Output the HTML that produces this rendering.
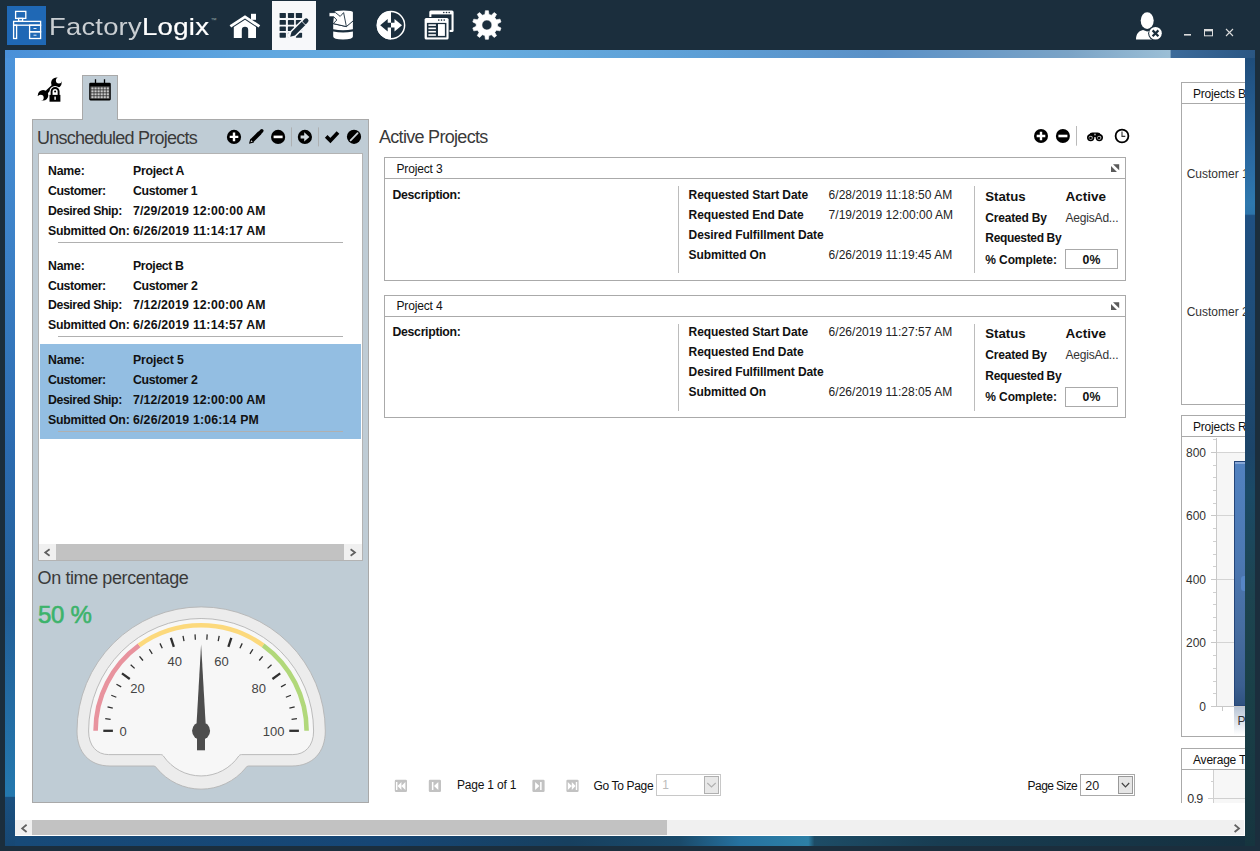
<!DOCTYPE html>
<html><head><meta charset="utf-8">
<style>
*{margin:0;padding:0;box-sizing:border-box}
html,body{width:1260px;height:851px;overflow:hidden;background:#1b2e3d;font-family:"Liberation Sans",sans-serif;color:#000;position:relative}
.a{position:absolute}
.t{position:absolute;white-space:nowrap;line-height:1}
svg{position:absolute;left:0;top:0;overflow:visible}
</style></head><body>
<div class="a" style="left:5px;top:50px;width:1250px;height:8px;background:linear-gradient(90deg,#4a90d8 0%,#5fa6df 20%,#68aee0 35%,#5d9fd6 55%,#5a90c6 70%,#7aa3c6 85%,#9cbfd6 93.2%,#3d6b9a 93.3%,#2a5683 100%)"></div>
<div class="a" style="left:5px;top:58px;width:10px;height:788px;background:linear-gradient(180deg,#4b93da 0%,#3b80c6 25%,#2b6bb0 50%,#225f98 70%,#2478ae 93.7%,#1a5080 93.8%,#174874 100%)"></div>
<div class="a" style="left:1245px;top:58px;width:10px;height:788px;background:linear-gradient(180deg,#1f4d7b 0%,#2a68a0 12%,#2e78ae 18.5%,#2c74aa 19.8%,#1f5082 20%,#1f4d78 35%,#1c4468 50%,#1b4a66 55%,#1d4450 68%,#1a4048 80%,#16353f 100%)"></div>
<div class="a" style="left:15px;top:836px;width:1230px;height:10px;background:linear-gradient(90deg,#174a78 0%,#164675 30%,#17405f 45%,#1a4a6a 54%,#2672a0 59%,#2d80a6 64.5%,#1d4c66 65%,#183d52 75%,#15303f 100%)"></div>
<div class="a" style="left:15px;top:58px;width:1230px;height:778px;background:#fff"></div>
<div class="a" style="left:7px;top:6px;width:39px;height:39px;background:#1f68b5"></div>
<div class="a" style="left:272px;top:1px;width:44px;height:49px;background:#f7f8fa"></div>
<svg width="1260" height="50" viewBox="0 0 1260 50">
<g fill="none" stroke="#fff" stroke-width="1.3"><rect x="15.6" y="11.4" width="10.2" height="7"/><rect x="18.6" y="18.4" width="4" height="2.8"/><rect x="13.6" y="21.4" width="27" height="3.8"/><rect x="13.6" y="25.2" width="3" height="13.3"/><rect x="29.6" y="25.2" width="11" height="6.6"/><rect x="29.6" y="31.8" width="11" height="6.7"/></g><g stroke="#fff" stroke-width="0.9"><path d="M33.5,28.5h3M33.5,35.2h3"/></g>
<g fill="#fff"><path d="M229.6,25.2 L245,15.2 L260.2,25.2 L258.6,27.6 L245,18.6 L231.2,27.6Z"/><rect x="251" y="13.8" width="5" height="6"/><path d="M233.8,27 L245,19.8 L256,27 V38 H248.2 V30 A3.2,3.2 0 0 0 241.8,30 V38 H233.8Z"/></g>
<g fill="#1b2e3d">
<rect x="279.6" y="12.9" width="6.3" height="5.0" rx="0.6"/>
<rect x="279.6" y="20.1" width="6.3" height="4.7" rx="0.6"/>
<rect x="279.6" y="26.4" width="6.3" height="4.6" rx="0.6"/>
<rect x="279.6" y="32.8" width="6.3" height="4.9" rx="0.6"/>
<rect x="287.9" y="12.9" width="6.2" height="5.0" rx="0.6"/>
<rect x="287.9" y="20.1" width="6.2" height="4.7" rx="0.6"/>
<rect x="287.9" y="26.4" width="6.2" height="4.6" rx="0.6"/>
<rect x="287.9" y="32.8" width="6.2" height="4.9" rx="0.6"/>
<rect x="295.8" y="12.9" width="6.3" height="5.0" rx="0.6"/>
<rect x="295.8" y="20.1" width="6.3" height="4.7" rx="0.6"/>
<rect x="295.8" y="26.4" width="6.3" height="4.6" rx="0.6"/>
<rect x="295.8" y="32.8" width="6.3" height="4.9" rx="0.6"/>
</g>
<path d="M291.5,35.5 L306,21" stroke="#f7f8fa" stroke-width="8" stroke-linecap="round"/><path d="M294.9,35.4 L291.5,32 L302,21.5 L305.4,24.9Z M291.5,32 L294.9,35.4 L290.2,36.8Z" fill="#1b2e3d"/><path d="M304.6,22.3 L306.2,20.7" stroke="#1b2e3d" stroke-width="4.6" stroke-linecap="round"/><path d="M301.9,21.4 L305.5,25" stroke="#f7f8fa" stroke-width="0.9"/>
<g fill="#fff"><path d="M333.2,31.6 Q343,33.6 352.9,31.6 V36.6 Q352.9,39.6 343,39.6 Q333.2,39.6 333.2,36.6Z"/><path d="M334.4,12.2 Q334.4,10.6 343.6,10.6 Q352.9,10.6 352.9,12.2 V29.2 Q343,31.2 333.2,29.2 V23Z"/></g><path d="M333,23.6 L346.4,26.6 L353,21" fill="none" stroke="#1b2e3d" stroke-width="1"/><path d="M329,12.6 L335.5,12.6 L340.2,16.4 L343.6,12.6 L346.4,26.6 L333.3,23.6 L336.8,20 L333.8,16.8 L329,16.8Z" fill="#fff" stroke="#1b2e3d" stroke-width="0.9" stroke-linejoin="miter"/>
<circle cx="391" cy="25.2" r="13.6" fill="#1b2e3d" stroke="#fff" stroke-width="1.5"/><path d="M391,10.9 A14.3,14.3 0 0 0 391,39.5Z" fill="#fff"/><path d="M380.2,25.2 L387.7,19 V22.8 H391 V27.6 H387.7 V31.4Z" fill="#1b2e3d"/><path d="M402,25.2 L394.5,19 V22.8 H391 V27.6 H394.5 V31.4Z" fill="#fff"/>
<rect x="429.3" y="10.4" width="24.3" height="21.6" rx="1.6" fill="#fff"/><rect x="431.4" y="14.4" width="20.1" height="15.5" fill="#1b2e3d"/><g fill="#1b2e3d"><circle cx="443.8" cy="12.5" r="0.8"/><circle cx="446.5" cy="12.5" r="0.8"/><circle cx="449.2" cy="12.5" r="0.8"/></g><rect x="423.6" y="16.9" width="26" height="23.7" rx="2" fill="#1b2e3d"/><rect x="424.6" y="17.9" width="24" height="21.7" rx="1.6" fill="#fff"/><rect x="426.9" y="22.9" width="19.5" height="14.5" fill="#1b2e3d"/><g fill="#fff"><rect x="428.4" y="24.3" width="7.5" height="1.6"/><rect x="428.4" y="27.6" width="7.5" height="1.6"/><rect x="428.4" y="30.9" width="7.5" height="1.6"/><rect x="428.4" y="34.2" width="7.5" height="1.6"/><rect x="438" y="24.1" width="6.9" height="11.8"/></g><g fill="#1b2e3d"><circle cx="438.8" cy="20.1" r="0.8"/><circle cx="441.5" cy="20.1" r="0.8"/><circle cx="444.2" cy="20.1" r="0.8"/></g>
<path fill="#fff" fill-rule="evenodd" stroke="#fff" stroke-width="0.6" stroke-linejoin="round" d="M484.86,14.39 L485.39,10.68 L488.41,10.68 L488.94,14.39 L491.48,15.22 L494.10,12.53 L496.54,14.30 L494.78,17.62 L496.36,19.78 L500.05,19.14 L500.99,22.01 L497.62,23.66 L497.62,26.34 L500.99,27.99 L500.05,30.86 L496.36,30.22 L494.78,32.38 L496.54,35.70 L494.10,37.47 L491.48,34.78 L488.94,35.61 L488.41,39.32 L485.39,39.32 L484.86,35.61 L482.32,34.78 L479.70,37.47 L477.26,35.70 L479.02,32.38 L477.44,30.22 L473.75,30.86 L472.81,27.99 L476.18,26.34 L476.18,23.66 L472.81,22.01 L473.75,19.14 L477.44,19.78 L479.02,17.62 L477.26,14.30 L479.70,12.53 L482.32,15.22Z M491.9,25 A5,5 0 1 0 481.9,25 A5,5 0 1 0 491.9,25Z"/>
<g fill="#fff"><ellipse cx="1147.2" cy="20.6" rx="6.5" ry="8.4"/><path d="M1136,39.5 C1136,33.5 1139,31 1143,30 L1147.2,31.5 L1151.5,30 C1154,30.8 1156,32 1157,34 V39.5Z"/></g><circle cx="1155.5" cy="33.3" r="7.4" fill="#1b2e3d"/><circle cx="1155.5" cy="33.3" r="6.3" fill="#fff"/><path d="M1152.6,30.4 L1158.4,36.2 M1158.4,30.4 L1152.6,36.2" stroke="#1b2e3d" stroke-width="2.2"/>
<g stroke="#dcdcdc" fill="none"><path d="M1184,34.8 H1191" stroke-width="1.6"/><rect x="1204.5" y="29.5" width="8" height="6.3" stroke-width="1"/><path d="M1204.5,30.6 H1212.5" stroke-width="1.5"/><path d="M1226,29 L1233,36 M1233,29 L1226,36" stroke-width="1.1"/></g>
</svg>
<div class="t" style="left:48.80px;top:16.24px;font-size:23.4px;color:#c9ced2;letter-spacing:0.2px;transform:scaleX(1.17);transform-origin:0 0;">Factory</div>
<div class="t" style="left:141.80px;top:16.24px;font-size:23.4px;color:#fff;letter-spacing:0.2px;-webkit-text-stroke:0.2px #fff;transform:scaleX(1.18);transform-origin:0 0;">Logix</div>
<div class="t" style="left:210.50px;top:17.48px;font-size:6px;color:#9aa;">™</div>
<div class="a" style="left:82px;top:75px;width:36px;height:45px;background:#bfccd5;border:1px solid #a9a9a9;border-bottom:none"></div>
<div class="a" style="left:32px;top:119px;width:337px;height:684px;background:#bfccd5;border:1px solid #a9a9a9"></div>
<div class="a" style="left:83px;top:119px;width:34px;height:2px;background:#bfccd5"></div>
<div class="a" style="left:38px;top:153px;width:325px;height:408px;background:#fff;border:1px solid #b3b3b3"></div>
<div class="a" style="left:40px;top:344px;width:321px;height:95px;background:#93bee2"></div>
<div class="t" style="left:37.00px;top:128.86px;font-size:18px;color:#3a3a3a;letter-spacing:-0.75px;">Unscheduled Projects</div>
<div class="t" style="left:37.60px;top:568.96px;font-size:18px;color:#3a3a3a;letter-spacing:-0.405px;">On time percentage</div>
<div class="t" style="left:38.00px;top:602.64px;font-size:24px;color:#3cb36b;letter-spacing:-0.301px;-webkit-text-stroke:0.6px #3cb36b;">50 %</div>
<div class="t" style="left:48.00px;top:165.02px;font-size:12.3px;font-weight:700;color:#111;letter-spacing:-0.199px;">Name:</div>
<div class="t" style="left:133.00px;top:165.02px;font-size:12.3px;font-weight:700;color:#111;letter-spacing:-0.281px;">Project A</div>
<div class="t" style="left:48.00px;top:185.02px;font-size:12.3px;font-weight:700;color:#111;letter-spacing:-0.422px;">Customer:</div>
<div class="t" style="left:133.00px;top:185.02px;font-size:12.3px;font-weight:700;color:#111;letter-spacing:-0.346px;">Customer 1</div>
<div class="t" style="left:48.00px;top:205.02px;font-size:12.3px;font-weight:700;color:#111;letter-spacing:-0.413px;">Desired Ship:</div>
<div class="t" style="left:133.00px;top:205.02px;font-size:12.3px;font-weight:700;color:#111;letter-spacing:0.155px;">7/29/2019 12:00:00 AM</div>
<div class="t" style="left:48.00px;top:224.92px;font-size:12.3px;font-weight:700;color:#111;letter-spacing:-0.248px;">Submitted On:</div>
<div class="t" style="left:133.00px;top:224.92px;font-size:12.3px;font-weight:700;color:#111;letter-spacing:0.187px;">6/26/2019 11:14:17 AM</div>
<div class="a" style="left:58px;top:242px;width:285px;height:1px;background:#b0b0b0"></div>
<div class="t" style="left:48.00px;top:260.02px;font-size:12.3px;font-weight:700;color:#111;letter-spacing:-0.199px;">Name:</div>
<div class="t" style="left:133.00px;top:260.02px;font-size:12.3px;font-weight:700;color:#111;letter-spacing:-0.378px;">Project B</div>
<div class="t" style="left:48.00px;top:279.92px;font-size:12.3px;font-weight:700;color:#111;letter-spacing:-0.422px;">Customer:</div>
<div class="t" style="left:133.00px;top:279.92px;font-size:12.3px;font-weight:700;color:#111;letter-spacing:-0.326px;">Customer 2</div>
<div class="t" style="left:48.00px;top:299.22px;font-size:12.3px;font-weight:700;color:#111;letter-spacing:-0.413px;">Desired Ship:</div>
<div class="t" style="left:133.00px;top:299.22px;font-size:12.3px;font-weight:700;color:#111;letter-spacing:0.155px;">7/12/2019 12:00:00 AM</div>
<div class="t" style="left:48.00px;top:318.92px;font-size:12.3px;font-weight:700;color:#111;letter-spacing:-0.248px;">Submitted On:</div>
<div class="t" style="left:133.00px;top:318.92px;font-size:12.3px;font-weight:700;color:#111;letter-spacing:0.187px;">6/26/2019 11:14:57 AM</div>
<div class="a" style="left:58px;top:336px;width:285px;height:1px;background:#b0b0b0"></div>
<div class="t" style="left:48.00px;top:354.02px;font-size:12.3px;font-weight:700;color:#111;letter-spacing:-0.199px;">Name:</div>
<div class="t" style="left:133.00px;top:354.02px;font-size:12.3px;font-weight:700;color:#111;letter-spacing:-0.150px;">Project 5</div>
<div class="t" style="left:48.00px;top:374.22px;font-size:12.3px;font-weight:700;color:#111;letter-spacing:-0.422px;">Customer:</div>
<div class="t" style="left:133.00px;top:374.22px;font-size:12.3px;font-weight:700;color:#111;letter-spacing:-0.326px;">Customer 2</div>
<div class="t" style="left:48.00px;top:394.22px;font-size:12.3px;font-weight:700;color:#111;letter-spacing:-0.413px;">Desired Ship:</div>
<div class="t" style="left:133.00px;top:394.22px;font-size:12.3px;font-weight:700;color:#111;letter-spacing:0.155px;">7/12/2019 12:00:00 AM</div>
<div class="t" style="left:48.00px;top:414.42px;font-size:12.3px;font-weight:700;color:#111;letter-spacing:-0.248px;">Submitted On:</div>
<div class="t" style="left:133.00px;top:414.42px;font-size:12.3px;font-weight:700;color:#111;letter-spacing:0.181px;">6/26/2019 1:06:14 PM</div>
<div class="a" style="left:58px;top:431px;width:285px;height:1px;background:#b0b0b0"></div>
<div class="a" style="left:39px;top:544px;width:323px;height:16px;background:#f0f0f0"></div>
<div class="a" style="left:56px;top:544px;width:288px;height:16px;background:#c2c2c2"></div>
<svg width="1260" height="851" viewBox="0 0 1260 851">
<circle cx="234" cy="136.9" r="7.1" fill="#000"/><path d="M229.7,136.9 H238.3 M234,132.6 V141.20000000000002" stroke="#fff" stroke-width="2.4"/>
<path d="M251.8,140.8 L259.8,132.8" stroke="#000" stroke-width="4.2"/><path d="M260.2,132.4 L261.8,130.8" stroke="#000" stroke-width="3.6" stroke-linecap="round"/><path d="M249,143.8 L250.3,138.8 L254,142.5Z" fill="#000"/><path d="M250.6,142.2 L251.2,140.2 L252.6,141.6Z" fill="#ddd"/>
<circle cx="278.1" cy="136.9" r="7.1" fill="#000"/><path d="M273.6,136.9 H282.6" stroke="#fff" stroke-width="2.6"/>
<path d="M291.5,127.4 V146.4 M318.5,127.4 V146.4" stroke="#a8a8a8" stroke-width="0.8"/>
<circle cx="304.9" cy="136.9" r="7.1" fill="#000"/><path d="M300.6,135.4 H304.2 V132.2 L309.4,136.9 L304.2,141.6 V138.4 H300.6Z" fill="#d0d8de"/>
<path d="M326.2,136.4 L330.4,140.6 L338,132.4" stroke="#000" stroke-width="3.7" fill="none"/>
<circle cx="354" cy="136.8" r="7.1" fill="#000"/><path d="M350.6,140.4 L357.6,133.2" stroke="#c8d0d6" stroke-width="1.8" stroke-linecap="round"/>
<circle cx="1041" cy="136" r="7.0" fill="#000"/><path d="M1036.7,136 H1045.3 M1041,131.7 V140.3" stroke="#fff" stroke-width="2.4"/>
<circle cx="1062.9" cy="136" r="7.0" fill="#000"/><path d="M1058.4,136 H1067.4" stroke="#fff" stroke-width="2.6"/>
<path d="M1076.5,126 V145.7" stroke="#a8a8a8" stroke-width="0.8"/>
<path d="M1089,135 Q1090,132.3 1093,132.6 L1097,132.6 Q1100,132.3 1101,135 L1101,137 L1089,137Z" fill="#000"/><circle cx="1090.7" cy="137.6" r="3.7" fill="#000"/><circle cx="1099.3" cy="137.6" r="3.7" fill="#000"/><circle cx="1090.7" cy="137.8" r="2.1" fill="#bbb"/><circle cx="1099.3" cy="137.8" r="2.1" fill="#bbb"/><circle cx="1090.5" cy="138" r="1.3" fill="#000"/><circle cx="1099.1" cy="138" r="1.3" fill="#000"/><circle cx="1095" cy="134.5" r="0.9" fill="#aaa"/>
<circle cx="1122" cy="136" r="6.4" fill="none" stroke="#000" stroke-width="1.8"/><path d="M1122,131.5 V136.4 H1125.3" stroke="#333" stroke-width="1.1" fill="none"/>
<defs><mask id="wm"><rect x="30" y="70" width="40" height="40" fill="#fff"/><circle cx="58.9" cy="80.4" r="3.0" fill="#000"/><path d="M58.9,80.4 L59.5,72 L68,80Z" fill="#000"/><circle cx="40.7" cy="97.7" r="3.0" fill="#000"/><path d="M40.7,97.7 L32,97.5 L40.5,106Z" fill="#000"/></mask></defs><g mask="url(#wm)" fill="#000"><circle cx="56.4" cy="82.8" r="5.3"/><circle cx="43.1" cy="95.3" r="5.3"/><path d="M56.4,82.8 L43.1,95.3" stroke="#000" stroke-width="3.2"/></g><path d="M51.6,95 V91.5 A3.5,3.5 0 0 1 58.6,91.5 V95" fill="none" stroke="#fff" stroke-width="4.2"/><rect x="48.6" y="94" width="12.7" height="8.6" fill="#fff"/><path d="M51.6,95 V91.5 A3.5,3.5 0 0 1 58.6,91.5 V95" fill="none" stroke="#000" stroke-width="1.9"/><circle cx="55.1" cy="91.6" r="1" fill="#000"/><rect x="49.5" y="94.9" width="10.9" height="6.8" fill="#000"/><rect x="54.4" y="96.6" width="1.4" height="3.2" fill="#fff"/>
<rect x="89.2" y="82.8" width="21.6" height="17.6" rx="1.3" fill="#000"/><rect x="90.6" y="86.6" width="18.8" height="12.2" fill="#c9c9c9"/>
<rect x="90.60" y="86.6" width="0.7" height="12.2" fill="#222"/>
<rect x="93.65" y="86.6" width="0.7" height="12.2" fill="#222"/>
<rect x="96.70" y="86.6" width="0.7" height="12.2" fill="#222"/>
<rect x="99.75" y="86.6" width="0.7" height="12.2" fill="#222"/>
<rect x="102.80" y="86.6" width="0.7" height="12.2" fill="#222"/>
<rect x="105.85" y="86.6" width="0.7" height="12.2" fill="#222"/>
<rect x="108.90" y="86.6" width="0.7" height="12.2" fill="#222"/>
<rect x="90.6" y="86.60" width="18.8" height="0.7" fill="#222"/>
<rect x="90.6" y="89.55" width="18.8" height="0.7" fill="#222"/>
<rect x="90.6" y="92.50" width="18.8" height="0.7" fill="#222"/>
<rect x="90.6" y="95.45" width="18.8" height="0.7" fill="#222"/>
<rect x="90.6" y="98.40" width="18.8" height="0.7" fill="#222"/>
<path d="M95.5,79.2 V85 M104.5,79.2 V85" stroke="#000" stroke-width="1.3"/>
<path d="M77,731 A124,124 0 0 1 325.3,731 C325.3,752 313,766 292,766 L248.5,766 Q246.6,766 245.6,768 A57.4,57.4 0 0 1 156.6,768 Q155.6,766 153.7,766 L110,766 C89,766 77,752 77,731Z" fill="#ececec" stroke="#b4b4b4" stroke-width="0.9"/>
<path d="M88.6,731 A112.5,112.5 0 0 1 313.6,731 C313.6,746 305,754.6 292.8,754.6 L241.5,754.6 Q239.6,754.6 238.8,756 A45.6,45.6 0 0 1 163.4,756 Q162.6,754.6 160.7,754.6 L108.6,754.6 C97,754.6 88.6,746 88.6,731Z" fill="#f7f7f7" stroke="#b4b4b4" stroke-width="0.9"/>
<path d="M95.60,730.80 A105.5,105.5 0 0 1 139.09,645.45" fill="none" stroke="#e8939e" stroke-width="4.6"/>
<path d="M139.09,645.45 A105.5,105.5 0 0 1 263.11,645.45" fill="none" stroke="#fcd97c" stroke-width="4.6"/>
<path d="M263.11,645.45 A105.5,105.5 0 0 1 306.60,730.80" fill="none" stroke="#b1d87a" stroke-width="4.6"/>
<path d="M103.30,730.80 L112.90,730.80" stroke="#303030" stroke-width="2.3"/>
<path d="M105.26,718.69 L110.62,719.37" stroke="#303030" stroke-width="1.3"/>
<path d="M107.53,706.78 L112.77,708.12" stroke="#303030" stroke-width="1.3"/>
<path d="M111.28,695.24 L116.30,697.23" stroke="#303030" stroke-width="1.3"/>
<path d="M116.45,684.26 L121.18,686.86" stroke="#303030" stroke-width="1.3"/>
<path d="M121.98,673.31 L129.74,678.96" stroke="#303030" stroke-width="2.3"/>
<path d="M130.68,664.67 L134.62,668.37" stroke="#303030" stroke-width="1.3"/>
<path d="M139.52,656.37 L142.97,660.53" stroke="#303030" stroke-width="1.3"/>
<path d="M149.34,649.24 L152.23,653.80" stroke="#303030" stroke-width="1.3"/>
<path d="M159.97,643.39 L162.27,648.28" stroke="#303030" stroke-width="1.3"/>
<path d="M170.88,637.79 L173.84,646.92" stroke="#303030" stroke-width="2.3"/>
<path d="M183.00,635.91 L184.01,641.22" stroke="#303030" stroke-width="1.3"/>
<path d="M195.03,634.39 L195.37,639.78" stroke="#303030" stroke-width="1.3"/>
<path d="M207.17,634.39 L206.83,639.78" stroke="#303030" stroke-width="1.3"/>
<path d="M219.20,635.91 L218.19,641.22" stroke="#303030" stroke-width="1.3"/>
<path d="M231.32,637.79 L228.36,646.92" stroke="#303030" stroke-width="2.3"/>
<path d="M242.23,643.39 L239.93,648.28" stroke="#303030" stroke-width="1.3"/>
<path d="M252.86,649.24 L249.97,653.80" stroke="#303030" stroke-width="1.3"/>
<path d="M262.68,656.37 L259.23,660.53" stroke="#303030" stroke-width="1.3"/>
<path d="M271.52,664.67 L267.58,668.37" stroke="#303030" stroke-width="1.3"/>
<path d="M280.22,673.31 L272.46,678.96" stroke="#303030" stroke-width="2.3"/>
<path d="M285.75,684.26 L281.02,686.86" stroke="#303030" stroke-width="1.3"/>
<path d="M290.92,695.24 L285.90,697.23" stroke="#303030" stroke-width="1.3"/>
<path d="M294.67,706.78 L289.43,708.12" stroke="#303030" stroke-width="1.3"/>
<path d="M296.94,718.69 L291.58,719.37" stroke="#303030" stroke-width="1.3"/>
<path d="M298.90,730.80 L289.30,730.80" stroke="#303030" stroke-width="2.3"/>
<path d="M201.1,644.3 L205.6,723 L196.6,723Z" fill="#4d4d4d"/><circle cx="201.1" cy="730.8" r="9" fill="#4d4d4d"/><rect x="197" y="735" width="8" height="15.3" fill="#4d4d4d"/>
</svg>
<div class="t" style="left:123.10px;top:725.27px;font-size:13px;color:#444;transform:translateX(-50%);">0</div>
<div class="t" style="left:137.60px;top:681.67px;font-size:13px;color:#444;transform:translateX(-50%);">20</div>
<div class="t" style="left:174.70px;top:654.67px;font-size:13px;color:#444;transform:translateX(-50%);">40</div>
<div class="t" style="left:221.60px;top:654.67px;font-size:13px;color:#444;transform:translateX(-50%);">60</div>
<div class="t" style="left:258.80px;top:681.67px;font-size:13px;color:#444;transform:translateX(-50%);">80</div>
<div class="t" style="left:273.60px;top:725.27px;font-size:13px;color:#444;transform:translateX(-50%);">100</div>
<div class="t" style="left:379.00px;top:127.55px;font-size:18px;color:#3a3a3a;letter-spacing:-0.7px;">Active Projects</div>
<div class="a" style="left:384px;top:157px;width:742px;height:124px;border:1px solid #aaa;background:#fff"></div>
<div class="a" style="left:385px;top:178px;width:740px;height:1px;background:#aaa"></div>
<div class="a" style="left:678px;top:186px;width:1px;height:87px;background:#bcbcbc"></div>
<div class="a" style="left:974px;top:186px;width:1px;height:87px;background:#bcbcbc"></div>
<div class="a" style="left:1065px;top:249px;width:53px;height:20px;border:1px solid #aaa;background:#fff"></div>
<svg width="1260" height="851"><path d="M1113,164.2 H1119.2 V170.2Z M1111,166 V172 H1117Z" fill="#5a5a5a"/></svg>
<div class="t" style="left:396.50px;top:163.27px;font-size:12px;color:#111;letter-spacing:-0.15px;">Project 3</div>
<div class="t" style="left:392.50px;top:188.62px;font-size:12.3px;font-weight:700;color:#111;letter-spacing:-0.312px;">Description:</div>
<div class="t" style="left:688.60px;top:188.97px;font-size:12px;font-weight:700;color:#111;letter-spacing:-0.1px;">Requested Start Date</div>
<div class="t" style="left:828.60px;top:188.97px;font-size:12px;color:#222;letter-spacing:0.02px;">6/28/2019 11:18:50 AM</div>
<div class="t" style="left:688.60px;top:208.82px;font-size:12px;font-weight:700;color:#111;letter-spacing:-0.1px;">Requested End Date</div>
<div class="t" style="left:828.60px;top:208.82px;font-size:12px;color:#222;letter-spacing:0.02px;">7/19/2019 12:00:00 AM</div>
<div class="t" style="left:688.60px;top:228.67px;font-size:12px;font-weight:700;color:#111;letter-spacing:-0.1px;">Desired Fulfillment Date</div>
<div class="t" style="left:688.60px;top:248.52px;font-size:12px;font-weight:700;color:#111;letter-spacing:-0.1px;">Submitted On</div>
<div class="t" style="left:828.60px;top:248.52px;font-size:12px;color:#222;letter-spacing:0.02px;">6/26/2019 11:19:45 AM</div>
<div class="t" style="left:985.30px;top:189.67px;font-size:13.2px;font-weight:700;color:#111;">Status</div>
<div class="t" style="left:1065.50px;top:189.52px;font-size:13.5px;font-weight:700;color:#111;">Active</div>
<div class="t" style="left:985.30px;top:212.07px;font-size:12px;font-weight:700;color:#111;letter-spacing:-0.186px;">Created By</div>
<div class="t" style="left:1065.50px;top:212.07px;font-size:12px;color:#333;letter-spacing:-0.190px;">AegisAd...</div>
<div class="t" style="left:985.30px;top:232.47px;font-size:12px;font-weight:700;color:#111;letter-spacing:-0.336px;">Requested By</div>
<div class="t" style="left:985.30px;top:254.17px;font-size:12px;font-weight:700;color:#111;letter-spacing:-0.108px;">% Complete:</div>
<div class="t" style="left:1091.50px;top:253.62px;font-size:12.3px;font-weight:700;color:#111;transform:translateX(-50%);">0%</div>
<div class="a" style="left:384px;top:295px;width:742px;height:123px;border:1px solid #aaa;background:#fff"></div>
<div class="a" style="left:385px;top:316px;width:740px;height:1px;background:#aaa"></div>
<div class="a" style="left:678px;top:324px;width:1px;height:87px;background:#bcbcbc"></div>
<div class="a" style="left:974px;top:324px;width:1px;height:87px;background:#bcbcbc"></div>
<div class="a" style="left:1065px;top:387px;width:53px;height:20px;border:1px solid #aaa;background:#fff"></div>
<svg width="1260" height="851"><path d="M1113,302.2 H1119.2 V308.2Z M1111,304 V310 H1117Z" fill="#5a5a5a"/></svg>
<div class="t" style="left:396.50px;top:300.47px;font-size:12px;color:#111;letter-spacing:-0.15px;">Project 4</div>
<div class="t" style="left:392.50px;top:325.82px;font-size:12.3px;font-weight:700;color:#111;letter-spacing:-0.312px;">Description:</div>
<div class="t" style="left:688.60px;top:326.17px;font-size:12px;font-weight:700;color:#111;letter-spacing:-0.1px;">Requested Start Date</div>
<div class="t" style="left:828.60px;top:326.17px;font-size:12px;color:#222;letter-spacing:0.02px;">6/26/2019 11:27:57 AM</div>
<div class="t" style="left:688.60px;top:346.02px;font-size:12px;font-weight:700;color:#111;letter-spacing:-0.1px;">Requested End Date</div>
<div class="t" style="left:688.60px;top:365.87px;font-size:12px;font-weight:700;color:#111;letter-spacing:-0.1px;">Desired Fulfillment Date</div>
<div class="t" style="left:688.60px;top:385.72px;font-size:12px;font-weight:700;color:#111;letter-spacing:-0.1px;">Submitted On</div>
<div class="t" style="left:828.60px;top:385.72px;font-size:12px;color:#222;letter-spacing:0.02px;">6/26/2019 11:28:05 AM</div>
<div class="t" style="left:985.30px;top:326.87px;font-size:13.2px;font-weight:700;color:#111;">Status</div>
<div class="t" style="left:1065.50px;top:326.72px;font-size:13.5px;font-weight:700;color:#111;">Active</div>
<div class="t" style="left:985.30px;top:349.27px;font-size:12px;font-weight:700;color:#111;letter-spacing:-0.186px;">Created By</div>
<div class="t" style="left:1065.50px;top:349.27px;font-size:12px;color:#333;letter-spacing:-0.190px;">AegisAd...</div>
<div class="t" style="left:985.30px;top:369.67px;font-size:12px;font-weight:700;color:#111;letter-spacing:-0.336px;">Requested By</div>
<div class="t" style="left:985.30px;top:391.37px;font-size:12px;font-weight:700;color:#111;letter-spacing:-0.108px;">% Complete:</div>
<div class="t" style="left:1091.50px;top:390.82px;font-size:12.3px;font-weight:700;color:#111;transform:translateX(-50%);">0%</div>
<svg width="1260" height="851"><g fill="#c2c2c2"><rect x="394.8" y="779.8" width="12.2" height="12.2" rx="1.2"/><rect x="428.8" y="779.8" width="12.2" height="12.2" rx="1.2"/><rect x="532.4" y="779.8" width="12.2" height="12.2" rx="1.2"/><rect x="566.4" y="779.8" width="12.2" height="12.2" rx="1.2"/></g><g fill="#fff"><rect x="396" y="782" width="1.4" height="8"/><path d="M397.6,786 L401.4,782 V790Z M401.4,786 L405.4,782 V790Z"/><rect x="431.9" y="782" width="1.5" height="8"/><path d="M434,786 L438.3,782 V790Z"/><rect x="540.1" y="782" width="1.5" height="8"/><path d="M539.4,786 L535.1,782 V790Z"/><rect x="575.8" y="782" width="1.4" height="8"/><path d="M575.6,786 L571.8,782 V790Z M571.8,786 L567.8,782 V790Z"/></g></svg>
<div class="t" style="left:457.00px;top:779.37px;font-size:12px;color:#111;letter-spacing:-0.199px;">Page 1 of 1</div>
<div class="t" style="left:593.50px;top:779.77px;font-size:12px;color:#111;letter-spacing:-0.337px;">Go To Page</div>
<div class="a" style="left:656px;top:774px;width:65px;height:22px;border:1px solid #c8c8c8;background:#fff"></div>
<div class="a" style="left:704px;top:776px;width:15px;height:18px;border:1px solid #b0b0b0;background:#e8e8e8"></div>
<div class="t" style="left:662.30px;top:779.47px;font-size:12px;color:#bbb;">1</div>
<svg width="1260" height="851"><path d="M707.3,783 L711.5,787 L715.7,783" fill="none" stroke="#b0b0b0" stroke-width="1.1"/></svg>
<div class="t" style="left:1027.60px;top:779.57px;font-size:12px;color:#111;letter-spacing:-0.567px;">Page Size</div>
<div class="a" style="left:1080px;top:774px;width:55px;height:22px;border:1px solid #aaa;background:#fff"></div>
<div class="a" style="left:1118px;top:776px;width:15px;height:18px;border:1px solid #999;background:#e6e6e6"></div>
<div class="t" style="left:1085.20px;top:779.62px;font-size:12.5px;color:#222;">20</div>
<svg width="1260" height="851"><path d="M1121.8,783 L1125.5,786.8 L1129.2,783" fill="none" stroke="#444" stroke-width="1.2"/></svg>
<div class="a" style="left:0;top:0;width:1245px;height:851px;overflow:hidden">
<div class="a" style="left:1181px;top:82px;width:120px;height:323px;border:1px solid #aaa;background:#fff"></div>
<div class="a" style="left:1181px;top:103px;width:120px;height:1px;background:#aaa"></div>
<div class="t" style="left:1193.00px;top:88.17px;font-size:12px;color:#111;letter-spacing:-0.2px;">Projects B</div>
<div class="t" style="left:1186.70px;top:167.77px;font-size:12px;color:#333;">Customer 1</div>
<div class="t" style="left:1186.70px;top:306.37px;font-size:12px;color:#333;">Customer 2</div>
<div class="a" style="left:1181px;top:415px;width:120px;height:322px;border:1px solid #aaa;background:#fff"></div>
<div class="a" style="left:1181px;top:436px;width:120px;height:1px;background:#aaa"></div>
<div class="t" style="left:1193.00px;top:421.27px;font-size:12px;color:#111;letter-spacing:-0.2px;">Projects R</div>
<div class="a" style="left:1217px;top:452px;width:40px;height:254px;background:#f6f6f6"></div>
<div class="t" style="left:1206.00px;top:446.97px;font-size:12px;color:#333;transform:translateX(-100%);">800</div>
<div class="a" style="left:1211px;top:452px;width:6px;height:1px;background:#c8c8c8"></div>
<div class="a" style="left:1217px;top:452px;width:40px;height:1px;background:#d4d4d4"></div>
<div class="t" style="left:1206.00px;top:510.47px;font-size:12px;color:#333;transform:translateX(-100%);">600</div>
<div class="a" style="left:1211px;top:515px;width:6px;height:1px;background:#c8c8c8"></div>
<div class="a" style="left:1217px;top:515px;width:40px;height:1px;background:#d4d4d4"></div>
<div class="t" style="left:1206.00px;top:573.97px;font-size:12px;color:#333;transform:translateX(-100%);">400</div>
<div class="a" style="left:1211px;top:579px;width:6px;height:1px;background:#c8c8c8"></div>
<div class="a" style="left:1217px;top:579px;width:40px;height:1px;background:#d4d4d4"></div>
<div class="t" style="left:1206.00px;top:637.47px;font-size:12px;color:#333;transform:translateX(-100%);">200</div>
<div class="a" style="left:1211px;top:642px;width:6px;height:1px;background:#c8c8c8"></div>
<div class="a" style="left:1217px;top:642px;width:40px;height:1px;background:#d4d4d4"></div>
<div class="t" style="left:1206.00px;top:700.97px;font-size:12px;color:#333;transform:translateX(-100%);">0</div>
<div class="a" style="left:1211px;top:706px;width:6px;height:1px;background:#c8c8c8"></div>
<div class="a" style="left:1217px;top:706px;width:40px;height:1px;background:#d4d4d4"></div>
<div class="a" style="left:1213px;top:439px;width:3px;height:1px;background:#d0d0d0"></div>
<div class="a" style="left:1213px;top:465px;width:3px;height:1px;background:#d0d0d0"></div>
<div class="a" style="left:1213px;top:477px;width:3px;height:1px;background:#d0d0d0"></div>
<div class="a" style="left:1213px;top:490px;width:3px;height:1px;background:#d0d0d0"></div>
<div class="a" style="left:1213px;top:503px;width:3px;height:1px;background:#d0d0d0"></div>
<div class="a" style="left:1213px;top:528px;width:3px;height:1px;background:#d0d0d0"></div>
<div class="a" style="left:1213px;top:541px;width:3px;height:1px;background:#d0d0d0"></div>
<div class="a" style="left:1213px;top:554px;width:3px;height:1px;background:#d0d0d0"></div>
<div class="a" style="left:1213px;top:566px;width:3px;height:1px;background:#d0d0d0"></div>
<div class="a" style="left:1213px;top:592px;width:3px;height:1px;background:#d0d0d0"></div>
<div class="a" style="left:1213px;top:604px;width:3px;height:1px;background:#d0d0d0"></div>
<div class="a" style="left:1213px;top:617px;width:3px;height:1px;background:#d0d0d0"></div>
<div class="a" style="left:1213px;top:630px;width:3px;height:1px;background:#d0d0d0"></div>
<div class="a" style="left:1213px;top:655px;width:3px;height:1px;background:#d0d0d0"></div>
<div class="a" style="left:1213px;top:668px;width:3px;height:1px;background:#d0d0d0"></div>
<div class="a" style="left:1213px;top:681px;width:3px;height:1px;background:#d0d0d0"></div>
<div class="a" style="left:1213px;top:693px;width:3px;height:1px;background:#d0d0d0"></div>
<div class="a" style="left:1216px;top:438px;width:1px;height:268px;background:#c8c8c8"></div>
<div class="a" style="left:1234px;top:461px;width:20px;height:245px;background:linear-gradient(180deg,#5282c0 0%,#4c78b2 40%,#466c9f 70%,#3b5f90 92%,#2f5280 100%);border:1px solid #25467a;border-right:none;box-shadow:inset 0 2px 0 #86a6d6"></div>
<div class="a" style="left:1234px;top:707px;width:12px;height:28px;background:linear-gradient(180deg,#b9c5d5,#fff)"></div>
<div class="t" style="left:1237.50px;top:715.47px;font-size:12px;color:#333;">P</div>
<div class="a" style="left:1241px;top:576px;width:6px;height:15px;background:#5686c6;border-radius:3px"></div>
<div class="a" style="left:1216px;top:706px;width:40px;height:1px;background:#c8c8c8"></div>
<div class="a" style="left:1222px;top:706px;width:1px;height:5px;background:#c8c8c8"></div>
<div class="a" style="left:1181px;top:748px;width:120px;height:60px;border:1px solid #aaa;background:#fff"></div>
<div class="a" style="left:1181px;top:769px;width:120px;height:1px;background:#aaa"></div>
<div class="t" style="left:1193.00px;top:754.27px;font-size:12px;color:#111;letter-spacing:-0.2px;">Average T</div>
<div class="a" style="left:1214px;top:770px;width:50px;height:33px;background:#f7f7f7"></div>
<div class="a" style="left:1213px;top:770px;width:1px;height:33px;background:#d0d0d0"></div>
<div class="a" style="left:1208px;top:798px;width:40px;height:1px;background:#d0d0d0"></div>
<div class="a" style="left:1211px;top:781px;width:2px;height:1px;background:#d0d0d0"></div>
<div class="t" style="left:1187.20px;top:792.52px;font-size:12.5px;color:#333;letter-spacing:-0.630px;">0.9</div>
</div>
<div class="a" style="left:15px;top:803px;width:1230px;height:17px;background:#fff"></div>
<div class="a" style="left:15px;top:820px;width:1229px;height:15px;background:#f0f0f0"></div>
<div class="a" style="left:32px;top:820px;width:635px;height:15px;background:#c2c2c2"></div>
<svg width="1260" height="851"><path d="M26.6,824.8 L22.2,828.4 L26.6,832" fill="none" stroke="#606060" stroke-width="1.8"/><path d="M1234.6,824.8 L1239,828.4 L1234.6,832" fill="none" stroke="#606060" stroke-width="1.8"/><path d="M49.6,549.3 L45.2,552.5 L49.6,555.7" fill="none" stroke="#606060" stroke-width="1.7"/><path d="M350.6,549.3 L355,552.5 L350.6,555.7" fill="none" stroke="#606060" stroke-width="1.7"/></svg>
</body></html>
